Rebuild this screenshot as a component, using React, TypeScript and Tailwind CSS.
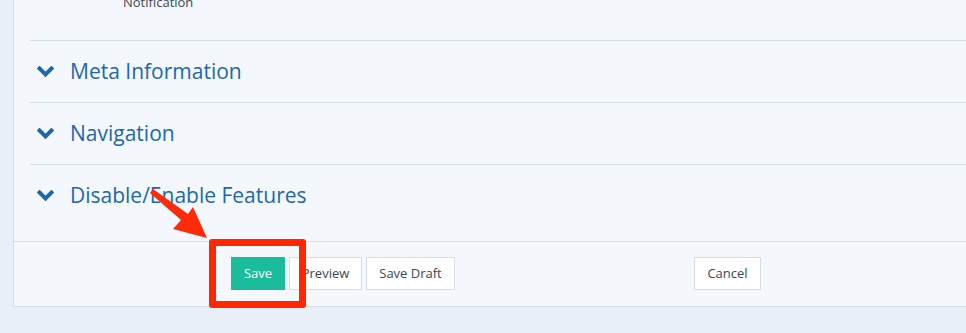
const sections = ["Meta Information", "Navigation", "Disable/Enable Features"];

function Chevron() {
  return (
    <svg width="17" height="12" viewBox="0 0 17 12" className="shrink-0">
      <polyline
        points="2.5,2.5 8.5,8.5 14.5,2.5"
        fill="none"
        stroke="#1d67b1"
        strokeWidth="4"
        strokeLinecap="square"
      />
    </svg>
  );
}

export default function App() {
  return (
    <div
      className="relative w-[966px] h-[333px] overflow-hidden bg-[#e9eff6]"
      style={{ fontFamily: '"Open Sans", "Noto Sans", sans-serif' }}
    >
      <div className="ml-[13px] w-[1000px] bg-[#f4f7fb] border-l border-b border-[#d8dee5]">
        {/* Top fragment */}
        <div className="h-[40px] overflow-hidden">
          <p className="mt-[-6px] pl-[109px] text-[13px] leading-[16px] text-[#3c4654]">
            Notification
          </p>
        </div>

        {/* Collapsible sections */}
        <div className="ml-[16px] pb-[15px]">
          {sections.map((title) => (
            <div
              key={title}
              className="flex h-[62px] items-center gap-[16px] border-t border-[#d8dde3] pl-[7px]"
            >
              <Chevron />
              <span className="text-[21px] leading-none text-[#1d67b1]">{title}</span>
            </div>
          ))}
        </div>

        {/* Footer */}
        <div className="flex items-center border-t border-[#d8dee5] pl-[217px] pt-[15px] pb-[16px] text-[13px]">
          <button className="h-[33px] w-[54px] bg-[#1abc9c] text-white">Save</button>
          <button className="ml-[4px] h-[33px] w-[73px] border border-[#d5dde6] bg-white text-[#3b4656]">
            Preview
          </button>
          <button className="ml-[4px] h-[33px] w-[89px] border border-[#d5dde6] bg-white text-[#3b4656]">
            Save Draft
          </button>
          <button className="ml-[239px] h-[33px] w-[67px] border border-[#d5dde6] bg-white text-[#3b4656]">
            Cancel
          </button>
        </div>
      </div>

      {/* Annotation overlay */}
      <div className="absolute left-[209px] top-[239px] h-[69px] w-[97px] rounded-[3px] border-[7px] border-[#ff2600]" />
      <svg className="absolute left-0 top-0" width="966" height="333">
        <polygon
          points="150,193 153,189 188,214 193,207 207,238 173,229 181,220"
          fill="#ff2a0a"
        />
      </svg>
    </div>
  );
}
